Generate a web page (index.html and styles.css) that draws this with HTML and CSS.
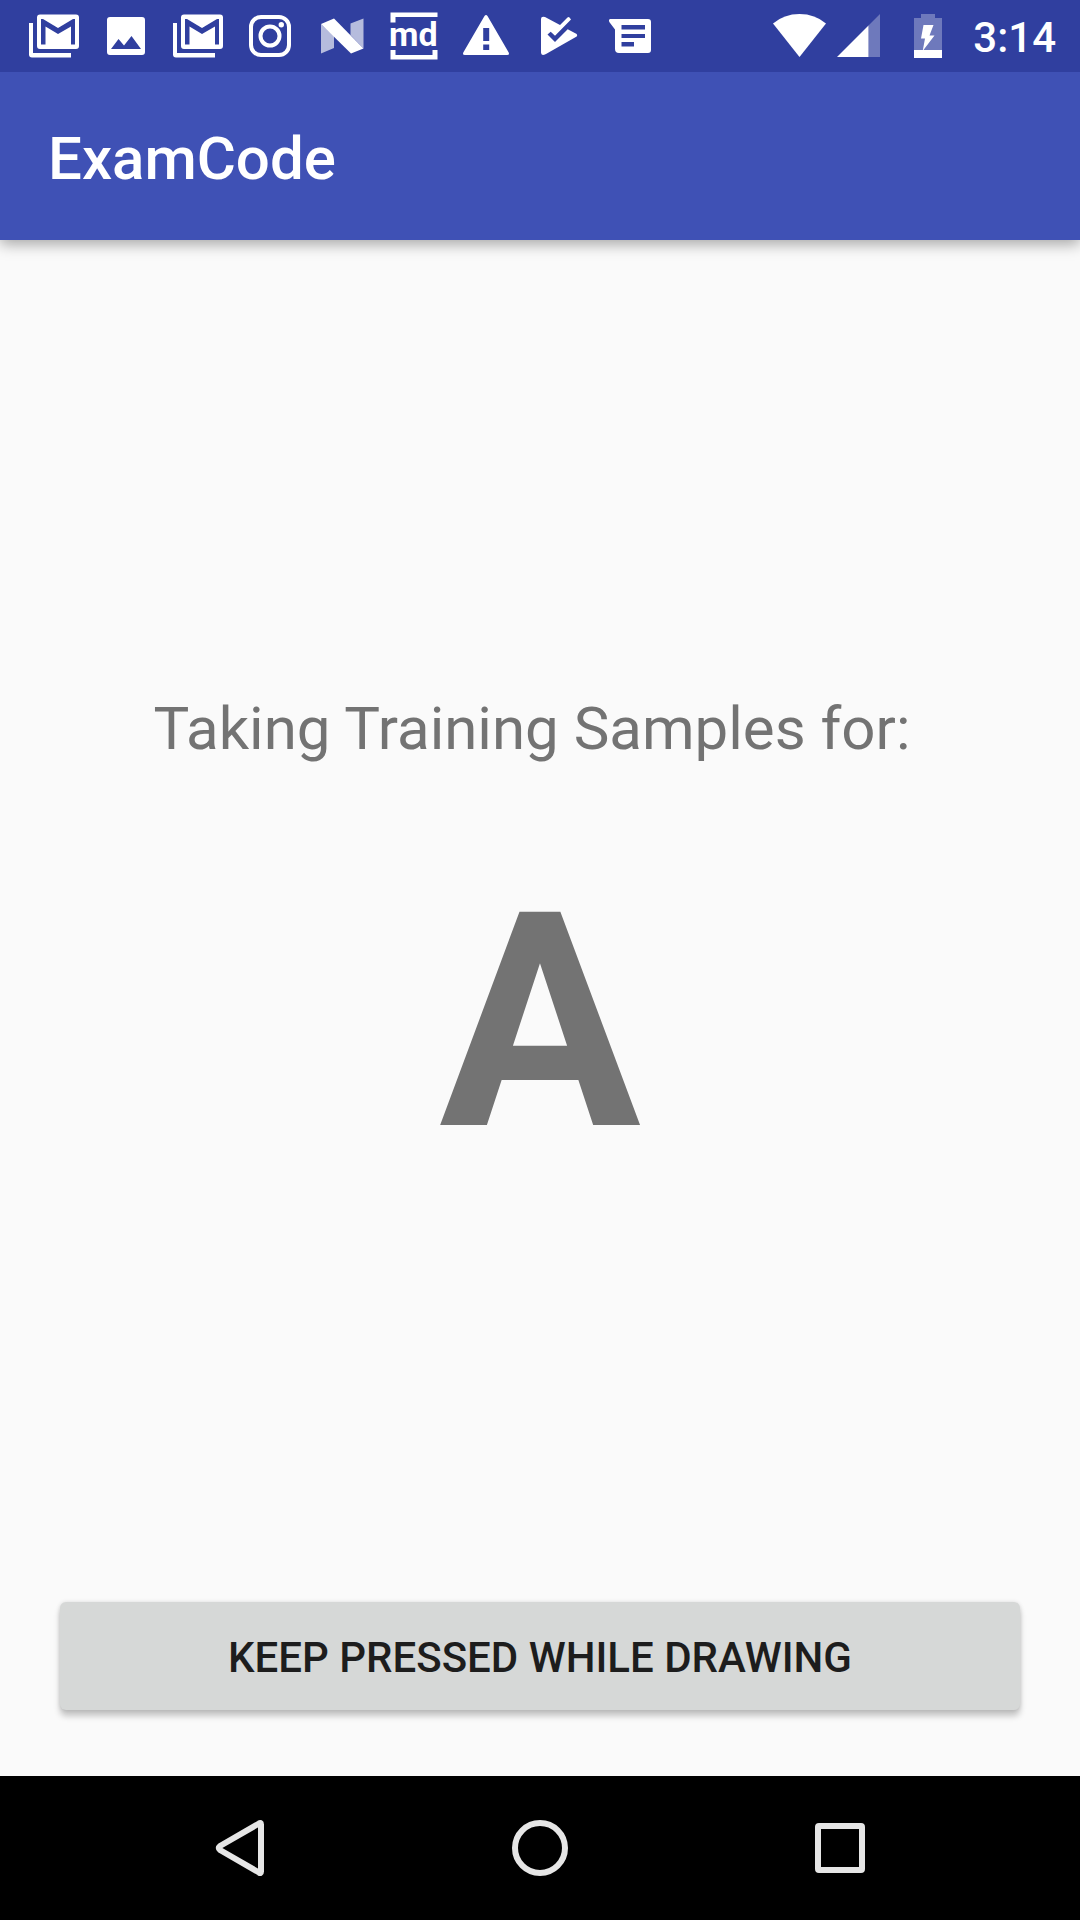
FILE: index.html
```html
<!DOCTYPE html>
<html lang="en">
<head>
<meta charset="utf-8">
<meta name="viewport" content="width=device-width, initial-scale=1">
<title>ExamCode</title>
<link rel="stylesheet" href="styles.css">
</head>
<body>
<div class="status-bar">
  <div class="notifications">
    <svg class="notification" viewBox="0 0 72 72" aria-label="Gmail">
      <path d="M11 23h4v30h38v4.500H14q-3 0-3-3z"/>
      <path fill-rule="evenodd" d="M22 14.500h36q3 0 3 3v28.500q0 3-3 3H22q-3 0-3-3V17.500q0-3 3-3zM23 19v25.500h4.500V26.500L40 34l13-7.500v18h4V19h-2L40 28 25 19z"/>
    </svg>
    <svg class="notification" viewBox="0 0 72 72" aria-label="Photo">
      <path fill-rule="evenodd" d="M20 17h32q3 0 3 3v32q0 3-3 3H20q-3 0-3-3V20q0-3 3-3zM21 49h30L41.500 36 34 45.500 28.500 39z"/>
    </svg>
    <svg class="notification" viewBox="0 0 72 72" aria-label="Gmail">
      <path d="M11 23h4v30h38v4.500H14q-3 0-3-3z"/>
      <path fill-rule="evenodd" d="M22 14.500h36q3 0 3 3v28.500q0 3-3 3H22q-3 0-3-3V17.500q0-3 3-3zM23 19v25.500h4.500V26.500L40 34l13-7.500v18h4V19h-2L40 28 25 19z"/>
    </svg>
    <svg class="notification" viewBox="0 0 72 72" aria-label="Instagram">
      <rect class="line" x="17" y="17" width="38" height="38" rx="10"/>
      <circle class="line" cx="36" cy="36" r="9.500"/>
      <circle cx="47.300" cy="24.700" r="2.700"/>
    </svg>
    <svg class="notification" viewBox="0 0 72 72" aria-label="Android">
      <path class="faded" d="M15 24L28 36V48L15 53.500zM57.500 18.500L44.500 23.500V35L57.500 48.500z"/>
      <path d="M15 24L28 18.500 57.500 48.500 45 53.500z"/>
    </svg>
    <svg class="notification" viewBox="0 0 72 72" aria-label="md">
      <path d="M12.500 12.500h47V17H17.500v5.500h-5zM12.500 50h5v5h37v-5h5v9.500h-47z"/>
      <text class="badge-text" x="11" y="46">md</text>
    </svg>
    <svg class="notification" viewBox="0 0 72 72" aria-label="Warning">
      <path fill-rule="evenodd" d="M34.500 16q1.500-2 3 0L58.700 52.500q1 2.500-1.500 2.500H14.800q-2.500 0-1.500-2.500zM33.200 28v13h6V28zM33.200 44.500v5.500h6v-5.500z"/>
    </svg>
    <svg class="notification" viewBox="0 0 72 72" aria-label="Play Store">
      <path d="M19 19q0-3 4-2L38 25l7.500-7.500q1-1 2 0l1.500 2L33 35.700l-4.300-4-3.200 2.800L33 42l12.700-12.700 9 4.700q1 1.500 0 2.500L24 54q-5 2.500-5-1.500z"/>
    </svg>
    <svg class="notification" viewBox="0 0 72 72" aria-label="Message">
      <path fill-rule="evenodd" d="M16.500 19H54q3 0 3 3v28q0 3-3 3H25q-4 0-4-4V29.500L15.300 22q-1-3 1.200-3zM27.500 25v4.500H51V25zM27.500 34v4H51v-4zM27.500 42v4.500H40V42z"/>
    </svg>
  </div>
  <div class="system">
    <svg class="wifi" viewBox="0 0 54 72" aria-label="Wi-Fi"><path d="M0 23.500Q11 14 26.500 14T53 23.500L26.500 57z"/></svg>
    <svg class="signal" viewBox="0 0 43 72" aria-label="Signal"><path class="dim" d="M31.500 25.500L43 14v43H31.500z"/><path d="M0 57L31.500 25.500V57z"/></svg>
    <svg class="battery" viewBox="0 0 28 72" aria-label="Charging"><path class="dim" d="M0 18h7v-4h14v4h7v32H0z"/><path d="M0 50h28v8H0zM9.500 25h10L15.500 35.500h5L8.700 51 11 38.500H7z"/></svg>
    <time class="clock">3:14</time>
  </div>
</div>
<header class="app-bar"><h1 class="title">ExamCode</h1></header>
<main class="content">
  <section class="stage">
    <p class="prompt">Taking Training Samples for:</p>
    <p class="letter">A</p>
  </section>
  <button class="draw-button" type="button">KEEP PRESSED WHILE DRAWING</button>
</main>
<nav class="nav-bar">
  <button class="nav-button" type="button" aria-label="Back"><svg class="nav-icon" viewBox="0 0 72 72"><path d="M55 11.500q2-1.500 2 1v47q0 2.500-2 1L16 38q-2.500-2 0-4z"/></svg></button>
  <button class="nav-button" type="button" aria-label="Home"><svg class="nav-icon" viewBox="0 0 72 72"><circle cx="36" cy="36" r="25"/></svg></button>
  <button class="nav-button" type="button" aria-label="Recent apps"><svg class="nav-icon" viewBox="0 0 72 72"><rect x="14" y="14" width="44" height="44" rx="1"/></svg></button>
</nav>
</body>
</html>
```

FILE: styles.css
```css
* {
  box-sizing: border-box;
}

body {
  display: flex;
  flex-direction: column;
  min-height: 100vh;
  margin: 0;
  background: #fafafa;
  font-family: Roboto, sans-serif;
}

svg {
  display: block;
  fill: #fff;
}

.status-bar {
  position: relative;
  z-index: 1;
  display: flex;
  justify-content: space-between;
  height: 72px;
  padding: 0 24px 0 18px;
  background: #303f9f;
  color: #fff;
}

.notifications,
.system {
  display: flex;
}

.notification {
  width: 72px;
  height: 72px;
}

.line {
  fill: none;
  stroke: #fff;
  stroke-width: 4;
}

.faded {
  opacity: 0.65;
}

.dim {
  opacity: 0.3;
}

.badge-text {
  font: 700 34px Roboto, sans-serif;
}

.wifi {
  width: 54px;
  height: 72px;
  margin-right: 10px;
}

.signal {
  width: 43px;
  height: 72px;
  margin-right: 34px;
}

.battery {
  width: 28px;
  height: 72px;
  margin-right: 31px;
}

.clock {
  padding-top: 2px;
  font-size: 42px;
  font-weight: 500;
  line-height: 72px;
}

.app-bar {
  display: flex;
  align-items: center;
  height: 168px;
  padding: 6px 48px 0;
  background: #3f51b5;
  box-shadow: 0 4px 14px rgba(0, 0, 0, 0.35);
}

.title {
  margin: 0;
  color: #fff;
  font-size: 60px;
  font-weight: 500;
  line-height: 72px;
}

.content {
  display: flex;
  flex: 1;
  flex-direction: column;
  padding: 0 60px 66px;
}

.stage {
  display: flex;
  flex: 1;
  flex-direction: column;
  justify-content: center;
  padding-top: 50px;
  color: #737373;
  text-align: center;
}

.prompt {
  margin: 0;
  padding-right: 16px;
  font-size: 60px;
  line-height: 72px;
}

.letter {
  margin: 82px 0 0;
  font-size: 300px;
  font-weight: 700;
  line-height: 352px;
}

.draw-button {
  height: 108px;
  padding: 2px 24px 0;
  border: 0;
  border-radius: 6px;
  background: #d6d8d7;
  box-shadow: 0 6px 6px rgba(0, 0, 0, 0.22), 0 0 4px rgba(0, 0, 0, 0.12);
  color: #1d1d1d;
  font: 500 42px Roboto, sans-serif;
}

.nav-bar {
  display: flex;
  height: 144px;
  padding: 0 90px;
  background: #000;
}

.nav-button {
  display: flex;
  flex: 1;
  align-items: center;
  justify-content: center;
  padding: 0;
  border: 0;
  background: none;
}

.nav-icon {
  width: 72px;
  height: 72px;
  fill: none;
  stroke: #e6e6e6;
  stroke-width: 6;
  stroke-linejoin: round;
}
```
